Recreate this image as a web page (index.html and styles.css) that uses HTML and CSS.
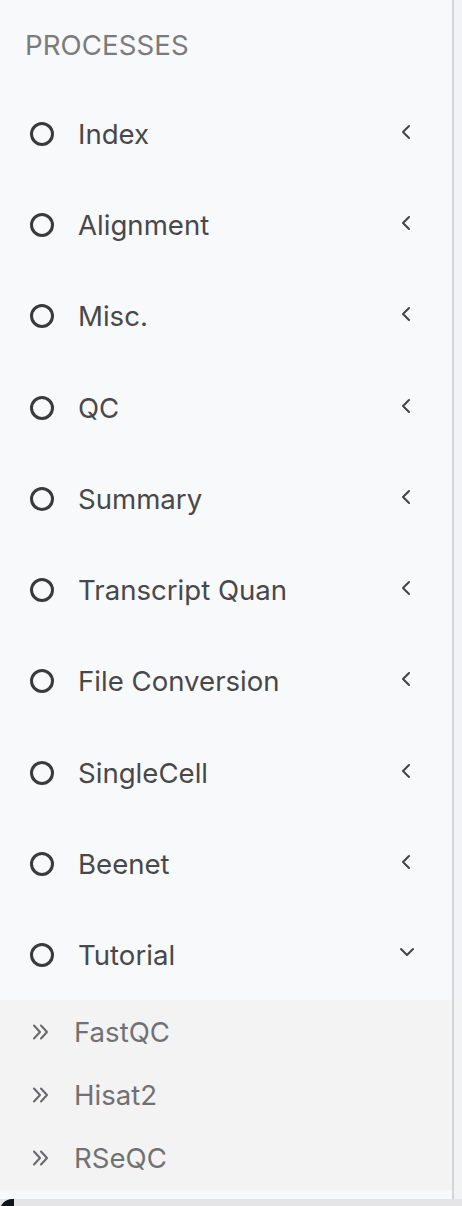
FILE: index.html
```html
<!DOCTYPE html>
<html>
<head>
<meta charset="utf-8">
<link rel="stylesheet" href="styles.css">
</head>
<body>
<div class="page">
  <aside class="sidebar">
    <div class="header">PROCESSES</div>
    <ul class="menu">
      <li class="item"><span class="circle"></span><span class="label">Index</span><svg class="chev" viewBox="0 0 12 16"><polyline points="9,2 3,8 9,14"/></svg></li>
      <li class="item"><span class="circle"></span><span class="label">Alignment</span><svg class="chev" viewBox="0 0 12 16"><polyline points="9,2 3,8 9,14"/></svg></li>
      <li class="item"><span class="circle"></span><span class="label">Misc.</span><svg class="chev" viewBox="0 0 12 16"><polyline points="9,2 3,8 9,14"/></svg></li>
      <li class="item"><span class="circle"></span><span class="label">QC</span><svg class="chev" viewBox="0 0 12 16"><polyline points="9,2 3,8 9,14"/></svg></li>
      <li class="item"><span class="circle"></span><span class="label">Summary</span><svg class="chev" viewBox="0 0 12 16"><polyline points="9,2 3,8 9,14"/></svg></li>
      <li class="item"><span class="circle"></span><span class="label">Transcript Quan</span><svg class="chev" viewBox="0 0 12 16"><polyline points="9,2 3,8 9,14"/></svg></li>
      <li class="item"><span class="circle"></span><span class="label">File Conversion</span><svg class="chev" viewBox="0 0 12 16"><polyline points="9,2 3,8 9,14"/></svg></li>
      <li class="item"><span class="circle"></span><span class="label">SingleCell</span><svg class="chev" viewBox="0 0 12 16"><polyline points="9,2 3,8 9,14"/></svg></li>
      <li class="item"><span class="circle"></span><span class="label">Beenet</span><svg class="chev" viewBox="0 0 12 16"><polyline points="9,2 3,8 9,14"/></svg></li>
      <li class="item open"><span class="circle"></span><span class="label">Tutorial</span><svg class="chev down" viewBox="0 0 16 12"><polyline points="2,3 8,9 14,3"/></svg></li>
    </ul>
    <ul class="submenu">
      <li class="subitem"><svg class="dbl" viewBox="0 0 17 16"><polyline points="2,1.5 8,8 2,14.5"/><polyline points="9,1.5 15,8 9,14.5"/></svg><span>FastQC</span></li>
      <li class="subitem"><svg class="dbl" viewBox="0 0 17 16"><polyline points="2,1.5 8,8 2,14.5"/><polyline points="9,1.5 15,8 9,14.5"/></svg><span>Hisat2</span></li>
      <li class="subitem"><svg class="dbl" viewBox="0 0 17 16"><polyline points="2,1.5 8,8 2,14.5"/><polyline points="9,1.5 15,8 9,14.5"/></svg><span>RSeQC</span></li>
    </ul>
  </aside>
  <div class="bottom"><span class="corner"></span></div>
</div>
</body>
</html>
```

FILE: styles.css
```css
html, body {
  margin: 0;
  padding: 0;
  background: #f2f3f5;
  font-family: Inter, "Liberation Sans", sans-serif;
}
.page {
  width: 462px;
  height: 1206px;
  display: flex;
  flex-direction: column;
  overflow: hidden;
}
.sidebar {
  width: 452px;
  height: 1199px;
  background: #f8f9fb;
  border-right: 2px solid #d4d5da;
  box-sizing: content-box;
  display: flex;
  flex-direction: column;
}
.header {
  height: 87px;
  box-sizing: border-box;
  padding: 30px 0 0 25px;
  font-size: 27.6px;
  line-height: 30px;
  color: #7b7b7d;
  letter-spacing: 0.1px;
}
.menu, .submenu {
  list-style: none;
  margin: 0;
  padding: 0;
}
.item {
  height: 91.3px;
  display: flex;
  align-items: center;
  padding-left: 30px;
  color: #48484b;
  font-size: 27.6px;
}
.circle {
  width: 24px;
  height: 24px;
  box-sizing: border-box;
  border: 3.5px solid #3a3a3c;
  border-radius: 50%;
  flex: none;
  margin-top: 2px;
}
.label {
  margin-left: 24px;
  flex: 1;
  margin-top: 2px;
}
.chev {
  width: 12px;
  height: 16px;
  margin-right: 40px;
  margin-top: -2px;
  fill: none;
  stroke: #434345;
  stroke-width: 2;
  stroke-linecap: round;
  stroke-linejoin: round;
}
.chev.down {
  width: 16px;
  height: 12px;
  margin-right: 37px;
  margin-top: -4px;
}
.submenu {
  background: #f3f3f4;
}
.subitem {
  height: 63.4px;
  display: flex;
  align-items: center;
  padding-left: 32px;
  color: #717173;
  font-size: 27.6px;
}
.subitem span {
  margin-left: 25px;
}
.dbl {
  width: 17px;
  height: 16px;
  fill: none;
  stroke: #68686a;
  stroke-width: 2;
  stroke-linecap: round;
  stroke-linejoin: round;
  flex: none;
}
.bottom {
  flex: 1;
  background: #e5e5e8;
  position: relative;
}
.corner {
  position: absolute;
  left: 0;
  top: 0;
  width: 14px;
  height: 14px;
  background: #0f1418;
  border-top-left-radius: 12px;
}
```
